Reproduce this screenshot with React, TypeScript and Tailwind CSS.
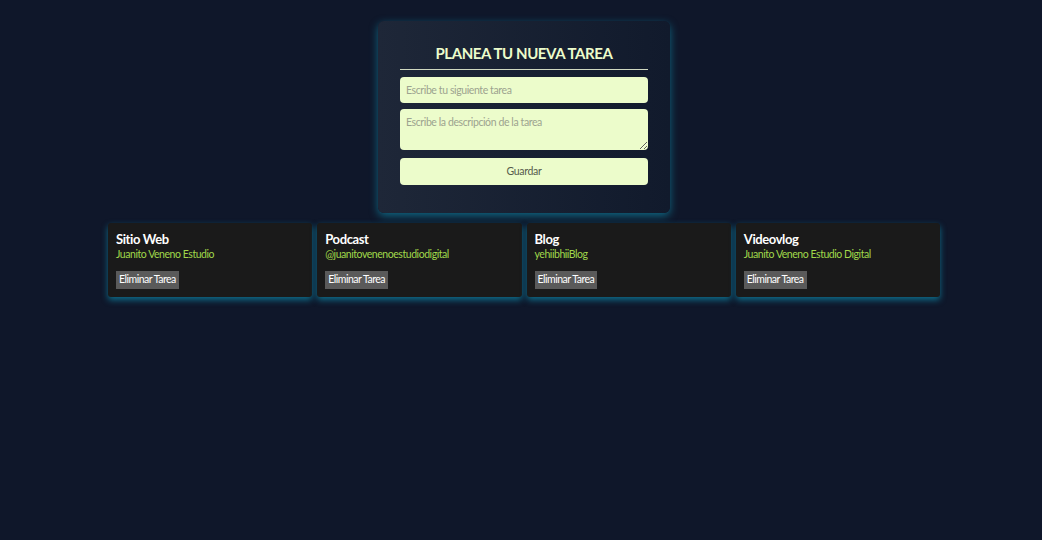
const tasks = [
  { title: "Sitio Web", desc: "Juanito Veneno Estudio" },
  { title: "Podcast", desc: "@juanitovenenoestudiodigital" },
  { title: "Blog", desc: "yehiibhiiBlog" },
  { title: "Videovlog", desc: "Juanito Veneno Estudio Digital" },
]

function TaskForm() {
  return (
    <form className="w-[292px] rounded-md bg-gradient-to-r from-[#1e2738] to-[#111a2c] px-[22px] pb-[28px] pt-[22px] shadow-[0_3px_8px_rgba(14,165,200,0.55)]">
      <h1 className="mb-[7px] border-b border-[#cfd8c0] pb-[5px] text-center text-[15px] font-bold leading-[21px] tracking-[-0.4px] text-[#ecfccb]">
        PLANEA TU NUEVA TAREA
      </h1>
      <input
        placeholder="Escribe tu siguiente tarea"
        className="mb-[6px] block h-[26px] w-full rounded-[4px] bg-[#ecfccb] px-[6px] text-[10.5px] tracking-[-0.4px] text-gray-700 outline-none placeholder:text-[#9ca38f]"
      />
      <textarea
        placeholder="Escribe la descripción de la tarea"
        className="mb-[8px] block h-[41px] w-full rounded-[4px] bg-[#ecfccb] px-[6px] pt-[6px] text-[10.5px] tracking-[-0.4px] text-gray-700 outline-none placeholder:text-[#9ca38f]"
      />
      <button
        type="button"
        className="block h-[27px] w-full rounded-[4px] bg-[#ecfccb] text-[10.5px] tracking-[-0.3px] text-[#555a4c]"
      >
        Guardar
      </button>
    </form>
  )
}

function TaskCard({ title, desc }: { title: string; desc: string }) {
  return (
    <div className="h-[74px] rounded-[3px] bg-[#1a1a1a] px-[8px] pt-[9px] shadow-[0_3px_6px_rgba(14,165,200,0.6)]">
      <h3 className="text-[13px] font-bold leading-[14px] tracking-[-0.4px] text-white">{title}</h3>
      <p className="mt-[1px] text-[10.5px] leading-[14px] tracking-[-0.45px] text-[#a0d84a]">{desc}</p>
      <button
        type="button"
        className="mt-[10px] h-[18px] bg-[#5a5a5a] px-[3px] text-[10.5px] tracking-[-0.5px] text-white"
      >
        Eliminar Tarea
      </button>
    </div>
  )
}

export default function App() {
  return (
    <div className="flex min-h-[540px] flex-col items-center bg-[#0f172a] pl-[6px] pt-[21px] font-['Lato',sans-serif]">
      <TaskForm />
      <div className="mt-[10px] grid w-[832px] grid-cols-4 gap-[5px]">
        {tasks.map((t) => (
          <TaskCard key={t.title} title={t.title} desc={t.desc} />
        ))}
      </div>
    </div>
  )
}
